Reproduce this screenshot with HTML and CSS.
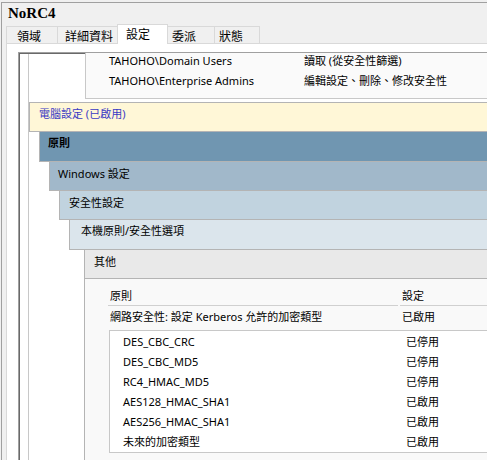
FILE: index.html
```html
<!DOCTYPE html>
<html lang="zh-Hant">
<head>
<meta charset="utf-8">
<title>NoRC4</title>
<link rel="stylesheet" href="styles.css">
</head>
<body>
<div class="frame">
  <div class="title">NoRC4</div>
  <div class="tabs">
    <div class="tab t1">領域</div>
    <div class="tab t2">詳細資料</div>
    <div class="tab t3 active">設定</div>
    <div class="tab t4">委派</div>
    <div class="tab t5">狀態</div>
  </div>
  <div class="panel">
    <div class="viewport">
      <div class="report">
        <div class="prev">
          <div class="prow"><span class="pc1">TAHOHO\Domain Users</span><span>讀取 (從安全性篩選)</span></div>
          <div class="prow"><span class="pc1">TAHOHO\Enterprise Admins</span><span>編輯設定、刪除、修改安全性</span></div>
        </div>
        <div class="head hy">電腦設定 (已啟用)</div>
        <div class="level">
          <div class="head h1">原則</div>
          <div class="level">
            <div class="head h2">Windows 設定</div>
            <div class="level">
              <div class="head h3">安全性設定</div>
              <div class="level">
                <div class="head h4">本機原則/安全性選項</div>
                <div class="level deep">
                  <div class="head h5">其他</div>
                  <div class="body">
                    <div class="thead">
                      <div class="th">原則</div>
                      <div class="th">設定</div>
                    </div>
                    <div class="trow">
                      <div class="td">網路安全性: 設定 Kerberos 允許的加密類型</div>
                      <div class="td">已啟用</div>
                    </div>
                    <div class="sub">
                      <div class="srow"><span>DES_CBC_CRC</span><span>已停用</span></div>
                      <div class="srow"><span>DES_CBC_MD5</span><span>已停用</span></div>
                      <div class="srow"><span>RC4_HMAC_MD5</span><span>已停用</span></div>
                      <div class="srow"><span>AES128_HMAC_SHA1</span><span>已啟用</span></div>
                      <div class="srow"><span>AES256_HMAC_SHA1</span><span>已啟用</span></div>
                      <div class="srow"><span>未來的加密類型</span><span>已啟用</span></div>
                    </div>
                  </div>
                </div>
              </div>
            </div>
          </div>
        </div>
      </div>
    </div>
  </div>
</div>
</body>
</html>
```

FILE: styles.css
```css
html, body {
  margin: 0;
  padding: 0;
  overflow: hidden;
  background: #f0f0f0;
}
body {
  width: 487px;
  height: 460px;
  font-family: "Noto Sans", "Noto Sans CJK TC", sans-serif;
  font-size: 11px;
  color: #000;
}
.frame {
  box-sizing: border-box;
  margin: 2px 0 0 1px;
  width: 486px;
  height: 458px;
  border-left: 1px solid #a0a0a0;
  border-top: 1px solid #a0a0a0;
  background: #f0f0f0;
  display: flex;
  flex-direction: column;
  overflow: hidden;
}
.title {
  flex: none;
  height: 21px;
  padding-left: 6px;
  font-family: "Liberation Serif", serif;
  font-weight: bold;
  font-size: 15px;
  line-height: 20px;
}
.tabs {
  flex: none;
  display: flex;
  align-items: flex-end;
  height: 19px;
  margin-left: 4px;
  position: relative;
  z-index: 2;
}
.tab {
  box-sizing: border-box;
  height: 17px;
  border-top: 1px solid #d9d9d9;
  border-left: 1px solid #d9d9d9;
  background: #f0f0f0;
  font-family: "Noto Sans CJK TC", sans-serif;
  font-size: 12px;
  line-height: 17px;
}
.t1 { width: 51px; padding-left: 10px; }
.t2 { width: 60px; padding-left: 7px; }
.t3 { width: 51px; padding-left: 8px; }
.t4 { width: 47px; padding-left: 4px; }
.t5 { width: 46px; padding-left: 4px; border-right: 1px solid #d9d9d9; }
.tab.active {
  height: 20px;
  margin-bottom: -1px;
  background: #fff;
  border-right: 1px solid #d9d9d9;
  margin-right: -1px;
  position: relative;
  z-index: 3;
  line-height: 18px;
}
.panel {
  flex: 1;
  min-height: 0;
  margin-left: 4px;
  border-top: 1px solid #d9d9d9;
  border-left: 1px solid #d9d9d9;
  background: #fff;
  padding: 8px 0 0 11px;
  display: flex;
  flex-direction: column;
  overflow: hidden;
}
.viewport {
  flex: 1;
  min-height: 0;
  border-top: 1px solid #a0a0a0;
  border-left: 1px solid #a0a0a0;
  box-shadow: inset 1px 1px 0 #696969;
  padding: 1px 0 0 1px;
  overflow: hidden;
  background: #fff;
  display: flex;
  flex-direction: column;
}
.report {
  flex: 1;
  margin-left: 8px;
  border-left: 1px solid #c8c8c8;
}
.prev {
  margin: -3px 0 0 56px;
  border-left: 1px solid #c8c8c8;
  border-bottom: 1px solid #c8c8c8;
  background: #fafafa;
  padding: 0 0 7px 23px;
}
.prow {
  display: grid;
  grid-template-columns: 195px 1fr;
  line-height: 20px;
  white-space: nowrap;
}
.head {
  box-sizing: border-box;
  border-left: 1px solid #b4b4b4;
  border-bottom: 1px solid #b4b4b4;
  padding-top: 2px;
  line-height: 18px;
  white-space: nowrap;
}
.hy {
  margin-top: 3px;
  border-top: 1px solid #b4b4b4;
  height: 30px;
  background: #fff7d7;
  color: #3a3ac4;
  padding-left: 9px;
}
.level { margin-left: 10px; }
.level.deep { margin-left: 15px; }
.h1 { height: 30px; background: #7096b1; font-weight: bold; padding-left: 8px; padding-top: 2px; }
.h2 { height: 29px; background: #a1b8ca; padding-left: 8px; padding-top: 3px; }
.h3 { height: 29px; background: #c1d3df; padding-left: 9px; padding-top: 3px; }
.h4 { height: 30px; background: #dbe5ec; padding-left: 11px; padding-top: 2px; }
.h5 { height: 29px; background: #e9e9e9; padding-left: 9px; padding-top: 3px; }
.body {
  box-sizing: border-box;
  border-left: 1px solid #b4b4b4;
  background: #f9f9f9;
  padding: 8px 0 0 23px;
  height: 181px;
}
.thead {
  display: grid;
  grid-template-columns: 290px 1fr;
  column-gap: 2px;
}
.th {
  padding-left: 2px;
  line-height: 18px;
  border-bottom: 1px solid #d0d0d0;
}
.trow {
  display: grid;
  grid-template-columns: 290px 1fr;
  column-gap: 2px;
}
.td {
  padding: 2px 0 0 2px;
  height: 22px;
  line-height: 18px;
  white-space: nowrap;
}
.sub {
  margin-left: 1px;
  border: 1px solid #c8c8c8;
  border-right: none;
  background: #fff;
  padding-top: 1px;
}
.srow {
  display: grid;
  grid-template-columns: 283px 1fr;
  line-height: 20px;
  padding-left: 13px;
}
```
